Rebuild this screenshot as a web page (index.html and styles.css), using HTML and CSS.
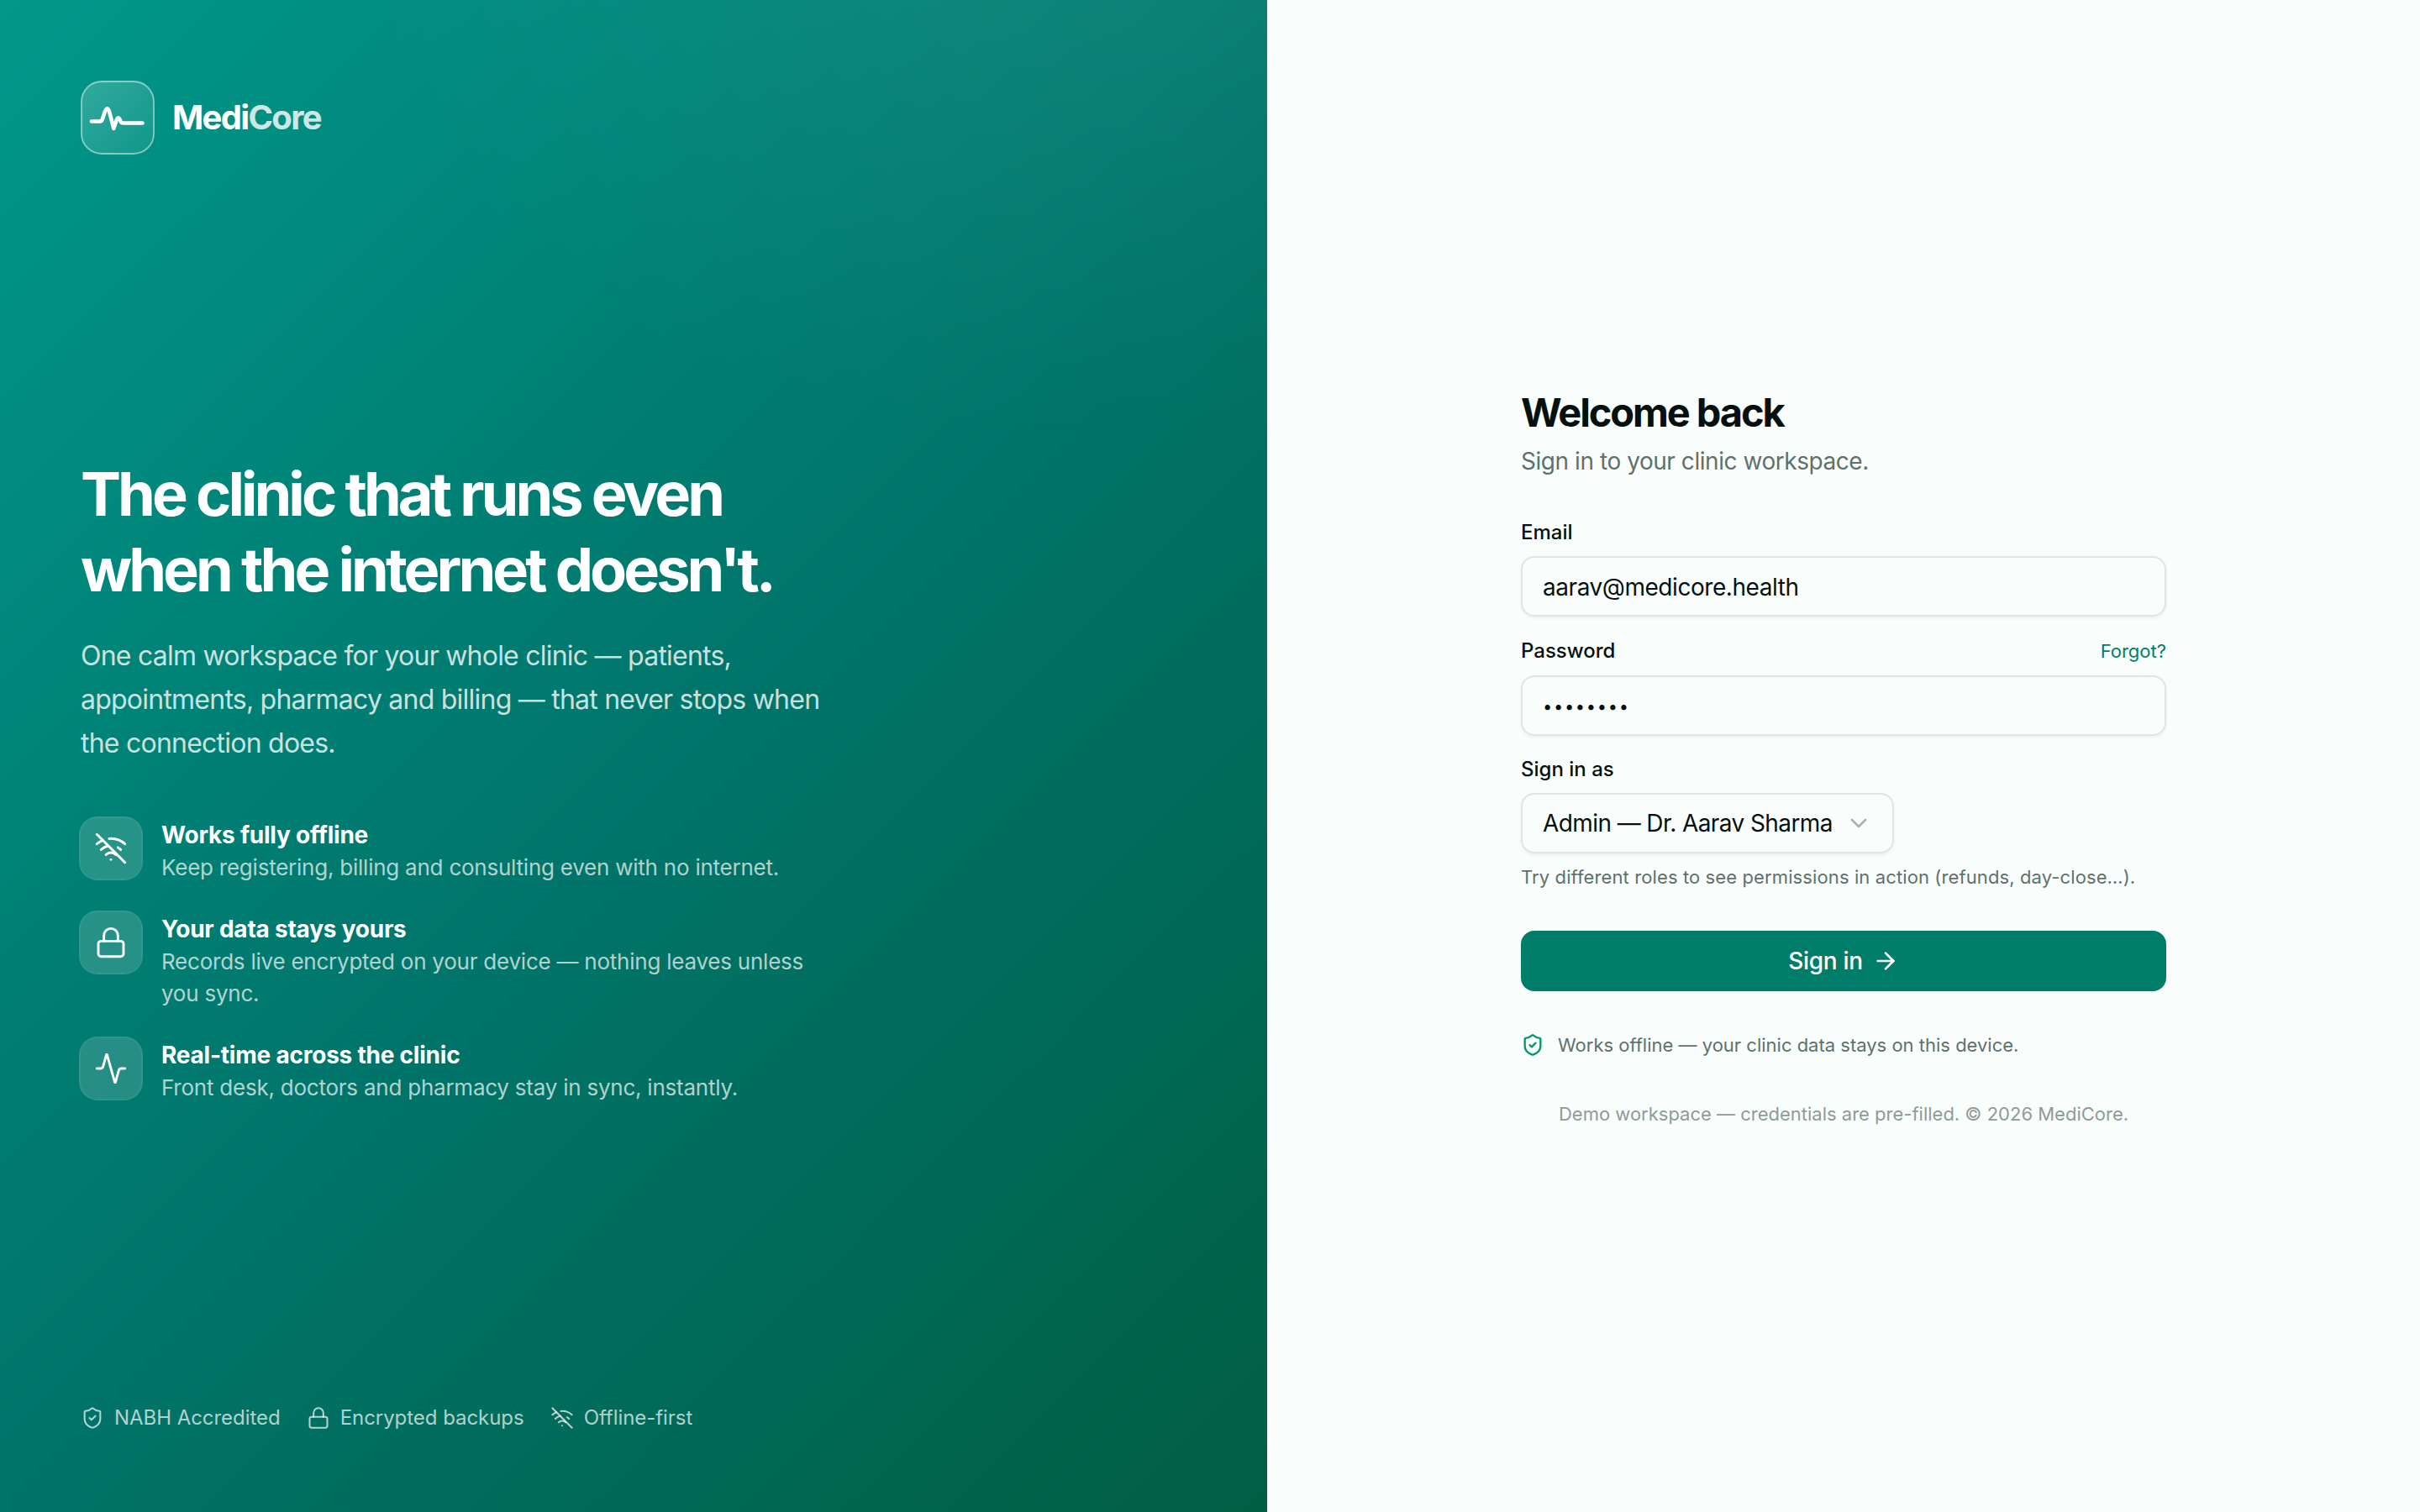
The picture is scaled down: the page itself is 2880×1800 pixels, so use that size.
FILE: index.html
```html
<!DOCTYPE html>
<html lang="en">
<head>
  <meta charset="UTF-8" />
  <title>MediCore - Sign in</title>
  <meta name="viewport" content="width=device-width, initial-scale=1" />
  <link rel="stylesheet" href="styles.css">
</head>
<body>

  <!-- Shared icons -->
  <svg class="sprite">
    <symbol id="wifi-off" viewBox="0 0 24 24">
      <path d="M12 20h.01" />
      <path d="M8.5 16.429a5 5 0 0 1 7 0" />
      <path d="M5 12.859a10 10 0 0 1 5.17-2.69" />
      <path d="M19 12.859a10 10 0 0 0-2.007-1.523" />
      <path d="M2 8.82a15 15 0 0 1 4.177-2.643" />
      <path d="M22 8.82a15 15 0 0 0-11.288-3.764" />
      <path d="m2 2 20 20" />
    </symbol>
    <symbol id="lock" viewBox="0 0 24 24">
      <rect width="18" height="11" x="3" y="11" rx="2" />
      <path d="M7 11V7a5 5 0 0 1 10 0v4" />
    </symbol>
    <symbol id="activity" viewBox="0 0 24 24">
      <path d="M22 12h-2.48a2 2 0 0 0-1.93 1.46l-2.35 8.36a.25.25 0 0 1-.48 0L9.24 2.18a.25.25 0 0 0-.48 0l-2.35 8.36A2 2 0 0 1 4.49 12H2" />
    </symbol>
    <symbol id="shield" viewBox="0 0 24 24">
      <path d="M20 13c0 5-3.5 7.5-7.66 8.95a1 1 0 0 1-.67-.01C7.5 20.5 4 18 4 13V6a1 1 0 0 1 1-1c2 0 4.5-1.2 6.24-2.72a1.17 1.17 0 0 1 1.52 0C14.51 3.81 17 5 19 5a1 1 0 0 1 1 1z" />
      <path d="m9 12 2 2 4-4" />
    </symbol>
  </svg>

  <div class="page">

    <!-- Brand panel -->
    <section class="brand">
      <div class="logo">
        <svg class="logo-mark" viewBox="0 0 88 88">
          <defs>
            <linearGradient id="mark" x1="0" y1="0" x2="1" y2="1">
              <stop offset="0" stop-color="#fff" stop-opacity=".2" />
              <stop offset="1" stop-color="#fff" stop-opacity=".06" />
            </linearGradient>
          </defs>
          <rect x="1" y="1" width="86" height="86" rx="24" fill="url(#mark)" stroke="#fff" stroke-opacity=".5" stroke-width="1.8" />
          <path class="pulse" d="M13 48.5H23Q25 48.5 26 45.5L29 36.5Q31.5 30 34 36.5L39.3 57L43 46Q44.7 42.5 46.5 46L47.5 48.5Q48.5 50.5 50.5 50.5H73.5" />
        </svg>
        <span class="logo-name">Medi<span>Core</span></span>
      </div>

      <div class="pitch">
        <h1>The clinic that runs even<br>when the internet doesn't.</h1>
        <p class="lead">One calm workspace for your whole clinic — patients, appointments, pharmacy and billing — that never stops when the connection does.</p>

        <ul class="features">
          <li>
            <span class="feature-icon"><svg class="icon"><use href="#wifi-off" /></svg></span>
            <div>
              <h3>Works fully offline</h3>
              <p>Keep registering, billing and consulting even with no internet.</p>
            </div>
          </li>
          <li>
            <span class="feature-icon"><svg class="icon"><use href="#lock" /></svg></span>
            <div>
              <h3>Your data stays yours</h3>
              <p>Records live encrypted on your device — nothing leaves unless you sync.</p>
            </div>
          </li>
          <li>
            <span class="feature-icon"><svg class="icon"><use href="#activity" /></svg></span>
            <div>
              <h3>Real-time across the clinic</h3>
              <p>Front desk, doctors and pharmacy stay in sync, instantly.</p>
            </div>
          </li>
        </ul>
      </div>

      <div class="badges">
        <span><svg class="icon"><use href="#shield" /></svg>NABH Accredited</span>
        <span><svg class="icon"><use href="#lock" /></svg>Encrypted backups</span>
        <span><svg class="icon"><use href="#wifi-off" /></svg>Offline-first</span>
      </div>
    </section>

    <!-- Sign in form -->
    <main class="signin">
      <form class="form">
        <h2>Welcome back</h2>
        <p class="subtitle">Sign in to your clinic workspace.</p>

        <div class="field">
          <div class="label-row"><label for="email">Email</label></div>
          <input type="email" id="email" value="aarav@medicore.health">
        </div>

        <div class="field">
          <div class="label-row">
            <label for="password">Password</label>
            <a href="#">Forgot?</a>
          </div>
          <input type="password" id="password" value="demo1234">
        </div>

        <div class="field">
          <div class="label-row"><label>Sign in as</label></div>
          <button type="button" class="select">
            Admin — Dr. Aarav Sharma
            <svg class="icon" viewBox="0 0 24 24"><path d="m6 9 6 6 6-6" /></svg>
          </button>
          <p class="hint">Try different roles to see permissions in action (refunds, day-close…).</p>
        </div>

        <button type="submit" class="submit">
          Sign in
          <svg class="icon" viewBox="0 0 24 24"><path d="M5 12h14" /><path d="m12 5 7 7-7 7" /></svg>
        </button>

        <p class="offline"><svg class="icon"><use href="#shield" /></svg>Works offline — your clinic data stays on this device.</p>
        <p class="demo">Demo workspace — credentials are pre-filled. © 2026 MediCore.</p>
      </form>
    </main>

  </div>

</body>
</html>
```

FILE: styles.css
```css
* {
  box-sizing: border-box;
}
body {
  margin: 0;
  font-family: Inter, sans-serif;
  font-size: 28px;
  color: #06110f;
  background-color: #f9fefc;
}
h1, h2, h3, p, ul {
  margin: 0;
  padding: 0;
}
a {
  color: #007d68;
  text-decoration: none;
}
.sprite {
  display: none;
}
.icon {
  fill: none;
  stroke: currentColor;
  stroke-width: 1.75;
  stroke-linecap: round;
  stroke-linejoin: round;
  flex-shrink: 0;
}

.page {
  display: grid;
  grid-template-columns: 1508px 1fr;
  height: 100vh;
}

/* Brand panel */
.brand {
  display: flex;
  flex-direction: column;
  justify-content: space-between;
  padding: 96px;
  color: white;
  background:
    radial-gradient(120% 80% at 85% -10%, rgb(255 255 255 / 0.065), transparent 50%),
    linear-gradient(135deg, #00988a 0%, #00746a 52%, #005f43 100%);
}
.logo {
  display: flex;
  align-items: center;
  gap: 21px;
}
.logo-mark {
  width: 88px;
  height: 88px;
}
.pulse {
  fill: none;
  stroke: white;
  stroke-width: 4.6;
  stroke-linecap: round;
  stroke-linejoin: round;
}
.logo-name {
  font-size: 40px;
  font-weight: 750;
  line-height: 46px;
  letter-spacing: -0.042em;
}
.logo-name span {
  opacity: 0.8;
}
.pitch {
  max-width: 896px;
}
h1 {
  font-size: 72px;
  font-weight: 700;
  line-height: 90px;
  letter-spacing: -0.055em;
}
.lead {
  margin-top: 32px;
  font-size: 32px;
  line-height: 52px;
  letter-spacing: -0.024em;
  color: rgb(255 255 255 / 0.8);
}
.features {
  display: flex;
  flex-direction: column;
  gap: 34px;
  margin-top: 63px;
  list-style: none;
}
.features li {
  display: flex;
  gap: 24px;
}
.feature-icon {
  display: flex;
  align-items: center;
  justify-content: center;
  flex-shrink: 0;
  width: 72px;
  height: 72px;
  border-radius: 20px;
  background-color: rgb(255 255 255 / 0.15);
  box-shadow: 0 0 0 2px rgb(255 255 255 / 0.2);
}
.feature-icon .icon {
  width: 40px;
  height: 40px;
}
.features h3 {
  padding-top: 1px;
  font-size: 28px;
  font-weight: 650;
  line-height: 39px;
  letter-spacing: -0.008em;
}
.features p {
  font-size: 26px;
  line-height: 38px;
  letter-spacing: -0.009em;
  color: rgb(255 255 255 / 0.7);
}
.badges {
  display: flex;
  gap: 31px;
  font-size: 24px;
  line-height: 32px;
  letter-spacing: -0.002em;
  color: rgb(255 255 255 / 0.7);
}
.badges span {
  display: flex;
  align-items: center;
  gap: 12px;
}
.badges .icon {
  width: 28px;
  height: 28px;
}

/* Sign in form */
.signin {
  display: flex;
  align-items: center;
  justify-content: center;
}
.form {
  width: 768px;
}
h2 {
  font-size: 47px;
  font-weight: 700;
  line-height: 64px;
  letter-spacing: -0.045em;
}
.subtitle {
  margin-top: 6px;
  font-size: 28px;
  line-height: 40px;
  letter-spacing: -0.016em;
  color: #60716c;
}
.field {
  margin-top: 22px;
}
.subtitle + .field {
  margin-top: 47px;
}
.label-row {
  display: flex;
  align-items: center;
  justify-content: space-between;
  margin-bottom: 10px;
  line-height: 36px;
}
label {
  font-size: 24px;
  font-weight: 500;
}
.label-row a {
  font-size: 22px;
  line-height: 38px;
}
input,
.select {
  height: 72px;
  padding: 0 24px;
  border: 2px solid #e0e5e3;
  border-radius: 16px;
  font: inherit;
  letter-spacing: -0.016em;
  color: inherit;
  background-color: transparent;
  box-shadow: 0 2px 4px rgb(0 0 0 / 0.05);
}
input {
  display: block;
  width: 100%;
  padding-top: 2px;
}
input[type="password"] {
  font-size: 20px;
  letter-spacing: 1.7px;
}
.select {
  display: flex;
  align-items: center;
  gap: 15px;
  letter-spacing: -0.021em;
}
.select .icon {
  width: 32px;
  height: 32px;
  stroke-width: 2;
  color: #a9b3b0;
}
.hint {
  margin-top: 10px;
  font-size: 22px;
  line-height: 36px;
  letter-spacing: 0.005em;
  color: #60716c;
}
.submit {
  display: flex;
  align-items: center;
  justify-content: center;
  gap: 11px;
  width: 100%;
  height: 72px;
  margin-top: 46px;
  border: none;
  border-radius: 16px;
  font: inherit;
  font-weight: 550;
  letter-spacing: -0.01em;
  color: white;
  background-color: #007d68;
  box-shadow: 0 2px 4px rgb(0 0 0 / 0.05);
}
.submit .icon {
  width: 32px;
  height: 32px;
  stroke-width: 2;
}
.offline {
  display: flex;
  align-items: center;
  gap: 16px;
  margin-top: 46px;
  font-size: 22px;
  line-height: 36px;
  color: #60716c;
}
.offline .icon {
  width: 28px;
  height: 28px;
  stroke-width: 2;
  color: #009966;
}
.demo {
  margin-top: 48px;
  font-size: 22px;
  line-height: 32px;
  text-align: center;
  color: #8f9b97;
}
```
